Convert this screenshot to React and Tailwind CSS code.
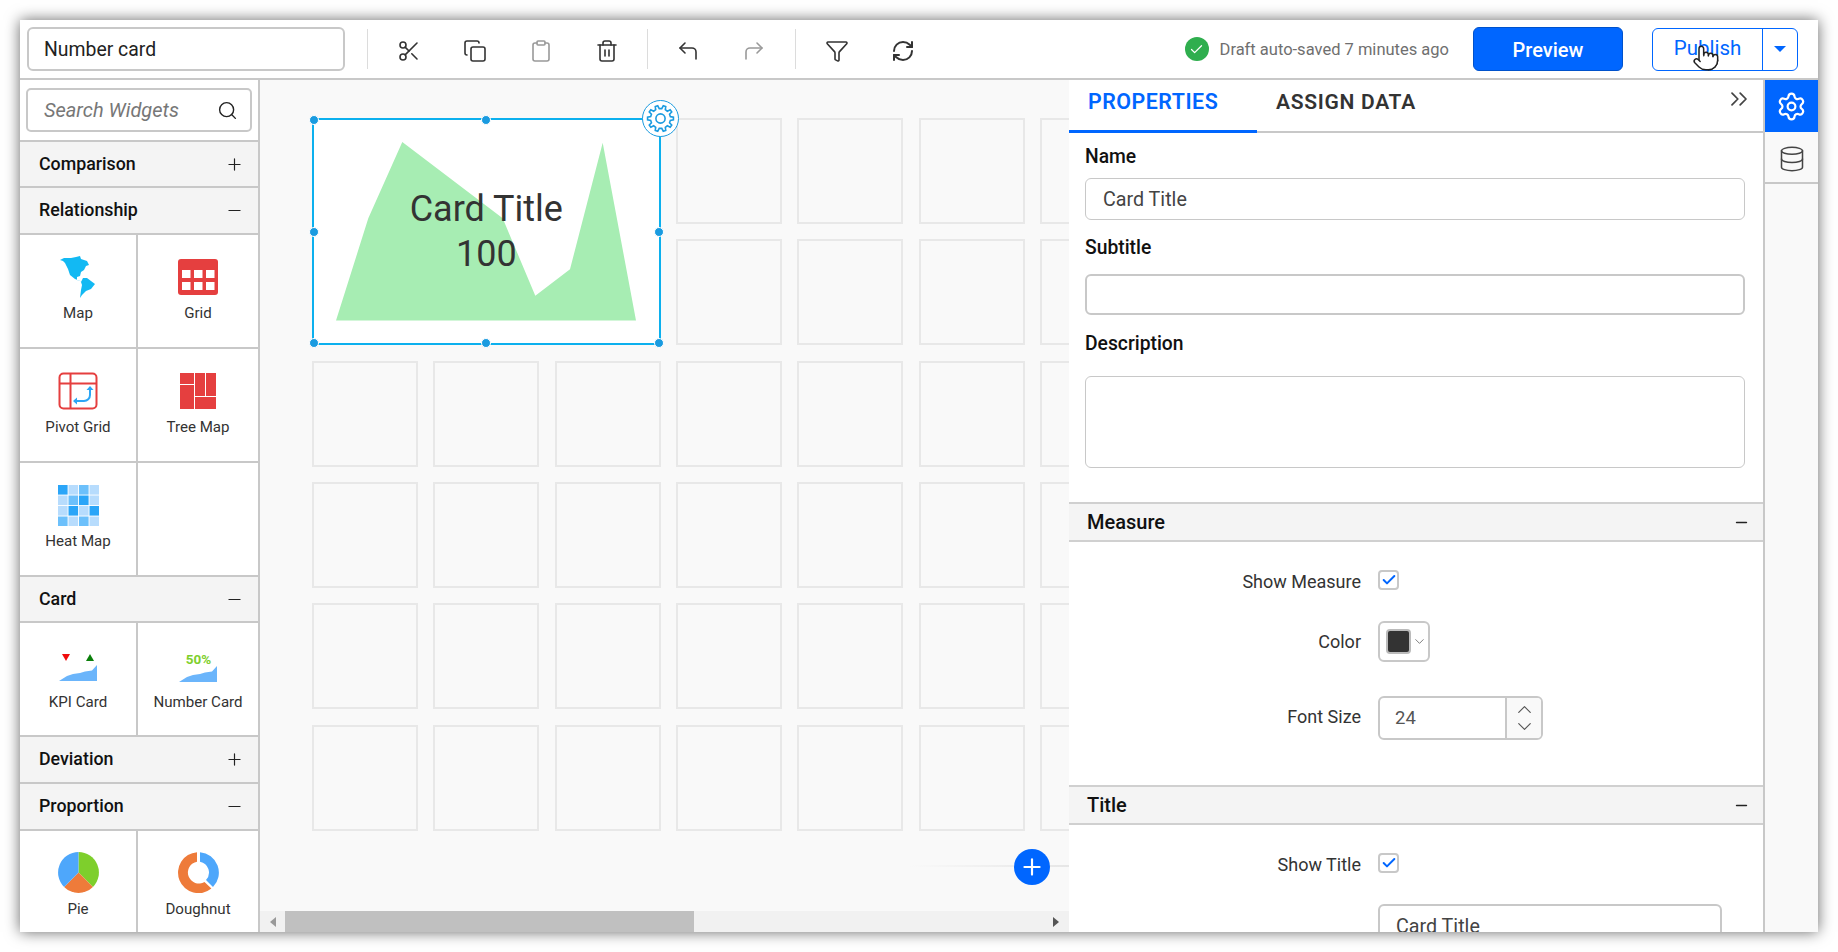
import React from 'react';
import {
  Scissors, Copy, Clipboard, Trash2, CornerUpLeft, CornerUpRight, Funnel, RefreshCw,
  Search, Settings, Database, ChevronsRight, Plus, Minus, Check, ChevronDown, ChevronUp, Pointer,
} from 'lucide-react';

const gearPath = (teeth, ro, ri, c) => {
  const pts = [];
  const step = (Math.PI * 2) / teeth;
  for (let i = 0; i < teeth; i++) {
    const a = i * step;
    [[-0.3, ri], [-0.16, ro], [0.16, ro], [0.3, ri]].forEach(([k, r]) => {
      pts.push(`${(c + r * Math.cos(a + k * step)).toFixed(2)} ${(c + r * Math.sin(a + k * step)).toFixed(2)}`);
    });
  }
  return 'M' + pts.join('L') + 'Z';
};

const MapIcon = () => (
  <svg width="36" height="42" viewBox="0 0 36 42" fill="#12b9f3">
    <path d="M0 4L4 2L11 2L16 1L20 0L21 3L27 5L29 9L26 10L24 14L21 16L20 20L17 21L17 24L23 26L15 23L10 19L8 13L5 7L3 5Z" />
    <path d="M23 22L27 22L31 25L35 28L31 33L26 35L22 39L20 42L21 34L22 29L21 26Z" />
  </svg>
);

const GridIcon = () => (
  <svg width="40" height="36" viewBox="0 0 40 36">
    <rect width="40" height="36" rx="3" fill="#e53f3f" />
    {[4, 16, 28].map(x => [11, 23].map(y => <rect key={`${x}-${y}`} x={x} y={y} width="8.5" height="8" fill="#fff" />))}
  </svg>
);

const PivotIcon = () => (
  <svg width="40" height="38" viewBox="0 0 40 38" fill="none">
    <rect x="1.5" y="1.5" width="37" height="35" rx="4" stroke="#e53f3f" strokeWidth="2" />
    <path d="M1.5 11.5H38.5M12.5 1.5V36.5" stroke="#e53f3f" strokeWidth="2" />
    <path d="M32 17V23a6 6 0 0 1-6 6H18" stroke="#2ca6f5" strokeWidth="2" />
    <path d="M28.5 18L32 14L35.5 18ZM19 25.5L15 29L19 32.5Z" fill="#2ca6f5" />
  </svg>
);

const TreeMapIcon = () => (
  <svg width="36" height="36" viewBox="0 0 36 36" fill="#e53f3f">
    <rect width="14" height="11" />
    <rect y="12" width="14" height="24" />
    <rect x="15" width="10" height="23" />
    <rect x="26" width="10" height="23" />
    <rect x="15" y="24" width="21" height="12" />
  </svg>
);

const heat = [
  ['#2aa5f8', '#b7dcfd', '#6cc0fb', '#b7dcfd'],
  ['#b7dcfd', '#6cc0fb', '#2aa5f8', '#b7dcfd'],
  ['#b7dcfd', '#2aa5f8', '#b7dcfd', '#2aa5f8'],
  ['#6cc0fb', '#b7dcfd', '#6cc0fb', '#b7dcfd'],
];

const HeatIcon = () => (
  <svg width="41" height="41" viewBox="0 0 41 41">
    {heat.map((row, y) => row.map((c, x) => <rect key={`${x}-${y}`} x={x * 10.5} y={y * 10.5} width="9.6" height="9.6" fill={c} />))}
  </svg>
);

const sparkArea = 'M0 16L8 11L14 9L21 8L26 6.5L33 5.5L38 0V16Z';

const KpiIcon = () => (
  <svg width="39" height="28" viewBox="0 0 39 28">
    <path d="M3 1H11L7 8Z" fill="#f00c0c" />
    <path d="M27 8L31 1L35 8Z" fill="#0a7f0a" />
    <path d={sparkArea} transform="translate(0 12)" fill="#6bb5fb" />
  </svg>
);

const NumberIcon = () => (
  <svg width="39" height="30" viewBox="0 0 39 30">
    <text x="19.5" y="11.5" textAnchor="middle" fontFamily="Roboto, sans-serif" fontWeight="700" fontSize="13.5" fill="#7ecf2c">50%</text>
    <path d={sparkArea} transform="translate(0 14)" fill="#6bb5fb" />
  </svg>
);

const PieIcon = () => (
  <svg width="41" height="41" viewBox="0 0 41 41">
    <path d="M20.5 20.5V0A20.5 20.5 0 0 1 34.9 35Z" fill="#7ecf2c" />
    <path d="M20.5 20.5L34.9 35A20.5 20.5 0 0 1 6.1 35Z" fill="#ee7b3a" />
    <path d="M20.5 20.5L6.1 35A20.5 20.5 0 0 1 20.5 0Z" fill="#4ea7fb" />
  </svg>
);

const DoughnutIcon = () => (
  <svg width="41" height="41" viewBox="0 0 41 41">
    <path d="M22 0.2A20.5 20.5 0 0 1 35 35L28 28A11 11 0 0 0 22 9.7Z" fill="#4ea7fb" />
    <path d="M33.4 36.6A20.5 20.5 0 1 1 19 0.2V9.7A11 11 0 1 0 26.5 30Z" fill="#ee7b3a" />
  </svg>
);

const Widget = ({ icon, label, top = 'pt-[20px]', gap = 'mt-[4px]', border = true }) => (
  <div className={`h-[114px] flex flex-col items-center ${top} border-b-2 border-[#c8c8c8] ${border ? 'border-r-2' : ''}`}>
    <div className="h-[44px] flex items-center justify-center">{icon}</div>
    {label && <div className={`${gap} text-[15.1px] leading-[20px] text-[#333]`}>{label}</div>}
  </div>
);

const Section = ({ title, open, h = 'h-[46px]' }) => (
  <div className={`${h} flex items-center justify-between pl-[19px] pr-[14px] bg-[#f4f4f4] border-b-2 border-[#c8c8c8]`}>
    <span className="text-[17.8px] font-medium text-[#111]">{title}</span>
    {open ? <Minus size={19} strokeWidth={1.5} className="text-[#222]" /> : <Plus size={19} strokeWidth={1.5} className="text-[#222]" />}
  </div>
);

const Sidebar = () => (
  <aside className="w-[240px] shrink-0 border-r-2 border-[#c8c8c8] overflow-hidden bg-white">
    <div className="h-[62px] px-[6px] pt-[8px] border-b-2 border-[#c8c8c8]">
      <div className="h-[44px] flex items-center justify-between pl-[16px] pr-[12px] border-2 border-[#c8c8c8] rounded-[5px]">
        <span className="italic text-[20px] text-[#777]">Search Widgets</span>
        <Search size={21} strokeWidth={1.6} className="text-[#222]" />
      </div>
    </div>
    <Section title="Comparison" />
    <Section title="Relationship" open h="h-[47px]" />
    <div className="grid grid-cols-[118px_120px]">
      <Widget icon={<MapIcon />} label="Map" />
      <Widget icon={<GridIcon />} label="Grid" border={false} />
      <Widget icon={<PivotIcon />} label="Pivot Grid" />
      <Widget icon={<TreeMapIcon />} label="Tree Map" border={false} />
      <Widget icon={<HeatIcon />} label="Heat Map" />
      <Widget border={false} />
    </div>
    <Section title="Card" open />
    <div className="grid grid-cols-[118px_120px]">
      <Widget icon={<KpiIcon />} label="KPI Card" top="pt-[22px]" gap="mt-[3px]" />
      <Widget icon={<NumberIcon />} label="Number Card" top="pt-[22px]" gap="mt-[3px]" border={false} />
    </div>
    <Section title="Deviation" h="h-[47px]" />
    <Section title="Proportion" open h="h-[47px]" />
    <div className="grid grid-cols-[118px_120px]">
      <Widget icon={<PieIcon />} label="Pie" top="pt-[19px]" gap="mt-[5px]" />
      <Widget icon={<DoughnutIcon />} label="Doughnut" top="pt-[19px]" gap="mt-[5px]" border={false} />
    </div>
  </aside>
);

const handles = [
  '-left-[5px] -top-[5px]', 'left-1/2 -ml-[5px] -top-[5px]',
  '-left-[5px] top-1/2 -mt-[5px]', '-right-[5px] top-1/2 -mt-[5px]',
  '-left-[5px] -bottom-[5px]', 'left-1/2 -ml-[5px] -bottom-[5px]', '-right-[5px] -bottom-[5px]',
];

const SelectedCard = () => (
  <div className="col-span-3 row-span-2 relative bg-white border-2 border-[#0cb0ee]">
    <svg className="absolute inset-0" width="345" height="224" viewBox="0 0 345 224">
      <path d="M22 200.5L54.3 98.3L88.3 22L188.7 98.3L221.3 175.7L256 149.3L288.7 22.7L322 200.5Z" fill="#a7edb3" />
    </svg>
    <div className="absolute left-0 right-0 top-[67px] text-center text-[36px] leading-[45px] text-[#333]">
      <div>Card Title</div>
      <div>100</div>
    </div>
    {handles.map(h => (
      <span key={h} className={`absolute ${h} w-[10px] h-[10px] rounded-full bg-[#1a9be0] border border-white`} />
    ))}
    <div className="absolute -right-[20px] -top-[20px] w-[37px] h-[37px] rounded-full bg-white border-[1.5px] border-[#1a9be0] flex items-center justify-center">
      <svg width="29" height="29" viewBox="0 0 29 29" fill="none" stroke="#1a9be0" strokeWidth="1.6">
        <path d={gearPath(10, 13, 10, 14.5)} />
        <circle cx="14.5" cy="14.5" r="4.6" />
      </svg>
    </div>
  </div>
);

const Canvas = () => (
  <main className="w-[809px] shrink-0 relative flex flex-col bg-[#f9f9f9] overflow-hidden">
    <div className="flex-1 overflow-hidden pl-[52px] pt-[38px]">
      <div className="w-max grid grid-cols-[repeat(7,106px)] auto-rows-[106px] gap-[15.33px]">
        <SelectedCard />
        {Array.from({ length: 36 }).map((_, i) => (
          <div key={i} className="border-2 border-[#e8e8e8]" />
        ))}
      </div>
    </div>
    <div className="h-[21px] shrink-0 flex items-center bg-[#f1f1f1]">
      <div className="w-[25px] flex justify-center"><div className="w-0 h-0 border-y-[5px] border-y-transparent border-r-[6px] border-r-[#999]" /></div>
      <div className="w-[409px] h-full bg-[#c0c0c0]" />
      <div className="flex-1" />
      <div className="w-[26px] flex justify-center"><div className="w-0 h-0 border-y-[5px] border-y-transparent border-l-[6px] border-l-[#555]" /></div>
    </div>
    <div className="absolute left-[650px] right-0 bottom-[65px] h-[2px] bg-gradient-to-r from-transparent to-[#e6e6e6]" />
    <div className="absolute right-[19px] bottom-[47px] w-[36px] h-[36px] rounded-full bg-[#0066ff] flex items-center justify-center">
      <Plus size={26} strokeWidth={2} className="text-white" />
    </div>
  </main>
);

const Label = ({ className, children }) => (
  <div className={`h-[24px] leading-[24px] text-[19.3px] font-medium text-[#111] ${className}`}>{children}</div>
);

const Row = ({ label, className, labelClass = '', children }) => (
  <div className={`flex items-center gap-[17px] ${className}`}>
    <div className={`w-[292px] text-right text-[18px] text-[#333] ${labelClass}`}>{label}</div>
    {children}
  </div>
);

const CheckBox = () => (
  <div className="w-[21px] h-[20px] rounded-[4px] border-2 border-[#c8c8c8] flex items-center justify-center">
    <Check size={16} strokeWidth={3} className="text-[#0066ff]" />
  </div>
);

const GroupHeader = ({ title, className }) => (
  <div className={`flex items-center justify-between h-[40px] pl-[18px] pr-[13px] bg-[#f4f4f4] border-y-2 border-[#d0d0d0] ${className}`}>
    <span className="text-[20px] font-medium text-[#111]">{title}</span>
    <Minus size={17} strokeWidth={2} className="text-[#222]" />
  </div>
);

const Properties = () => (
  <section className="w-[696px] shrink-0 border-r-2 border-[#c8c8c8] overflow-hidden bg-white">
    <div className="relative h-[53px] flex items-center pb-[6px] border-b-2 border-[#c8c8c8]">
      <div className="w-[188px] pl-[19px] text-[21.4px] font-semibold tracking-[0.5px] text-[#0066ff]">PROPERTIES</div>
      <div className="pl-[19px] text-[21px] font-semibold tracking-[0.7px] text-[#333]">ASSIGN DATA</div>
      <ChevronsRight size={28} strokeWidth={1.5} className="absolute right-[10px] top-[5px] text-[#444]" />
      <div className="absolute left-0 -bottom-[2px] w-[188px] h-[3px] bg-[#0066ff]" />
    </div>
    <div className="pl-[16px] pr-[18px]">
      <Label className="mt-[12px]">Name</Label>
      <div className="mt-[9px] h-[42px] flex items-center pl-[17px] pt-[2px] border border-[#c8c8c8] rounded-[6px] text-[19.7px] text-[#444]">Card Title</div>
      <Label className="mt-[16px]">Subtitle</Label>
      <div className="mt-[14px] h-[41px] border-2 border-[#c8c8c8] rounded-[6px]" />
      <Label className="mt-[17px]">Description</Label>
      <div className="mt-[20px] h-[92px] border border-[#c8c8c8] rounded-[6px]" />
    </div>
    <GroupHeader title="Measure" className="mt-[34px]" />
    <Row label="Show Measure" labelClass="mt-[3px]" className="mt-[28px] h-[20px]"><CheckBox /></Row>
    <Row label="Color" className="mt-[31px]">
      <div className="w-[52px] h-[41px] rounded-[6px] border-2 border-[#c8c8c8] flex items-center pl-[6px]">
        <div className="w-[25px] h-[25px] rounded-[4px] bg-[#333] border-2 border-[#bbb]" />
        <ChevronDown size={15} strokeWidth={1.2} className="ml-[1px] text-[#555]" />
      </div>
    </Row>
    <Row label="Font Size" labelClass="-mt-[4px]" className="mt-[34px] h-[44px]">
      <div className="w-[165px] h-[44px] rounded-[6px] border-2 border-[#c8c8c8] flex overflow-hidden">
        <div className="w-[127px] pl-[15px] pt-[2px] flex items-center text-[18.5px] text-[#555] border-r-2 border-[#c8c8c8]">24</div>
        <div className="flex-1 flex flex-col items-center justify-center bg-[#f9f9f9] text-[#555]">
          <ChevronUp size={23} strokeWidth={1.2} className="-mb-[3px]" />
          <ChevronDown size={23} strokeWidth={1.2} className="-mt-[3px]" />
        </div>
      </div>
    </Row>
    <GroupHeader title="Title" className="mt-[45px]" />
    <Row label="Show Title" labelClass="mt-[3px]" className="mt-[28px] h-[20px]"><CheckBox /></Row>
    <div className="ml-[309px] mt-[31px] w-[344px] h-[44px] pl-[16px] pt-[6px] border-2 border-[#c8c8c8] rounded-[6px] text-[19.7px] text-[#444]">Card Title</div>
  </section>
);

const Rail = () => (
  <div className="flex-1 bg-[#f9f9f9]">
    <div className="h-[52px] flex items-center justify-center bg-[#0066ff]">
      <Settings size={31} strokeWidth={1.7} className="text-white" />
    </div>
    <div className="h-[52px] flex items-center justify-center pt-[3px] border-b-2 border-[#c8c8c8]">
      <Database size={28} strokeWidth={1.3} className="text-[#444]" />
    </div>
  </div>
);

const ToolIcon = ({ icon: Icon, className, cls, sw = 1.6 }) => (
  <div className={`w-[66px] flex justify-center pt-[3px] ${cls || ''}`}>
    <Icon size={24} strokeWidth={sw} className={className} />
  </div>
);

const Sep = () => <div className="w-px h-[40px] bg-[#dcdcdc]" />;

const Header = () => (
  <header className="relative h-[60px] shrink-0 flex items-center pl-[7px] pr-[20px] bg-white border-b-2 border-[#c8c8c8]">
    <div className="w-[318px] h-[44px] flex items-center pl-[15px] pt-[2px] border-2 border-[#c8c8c8] rounded-[6px] text-[19.4px] text-[#222]">Number card</div>
    <div className="ml-[22px]"><Sep /></div>
    <ToolIcon icon={Scissors} className="text-[#333]" cls="ml-[8px]" />
    <ToolIcon icon={Copy} className="text-[#333]" />
    <ToolIcon icon={Clipboard} className="text-[#999]" />
    <ToolIcon icon={Trash2} className="text-[#333]" />
    <div className="ml-[7px]"><Sep /></div>
    <ToolIcon icon={CornerUpLeft} className="text-[#333]" cls="ml-[7px]" />
    <ToolIcon icon={CornerUpRight} className="text-[#999]" />
    <div className="ml-[8px]"><Sep /></div>
    <ToolIcon icon={Funnel} className="text-[#333]" cls="ml-[8px]" />
    <ToolIcon icon={RefreshCw} className="text-[#333]" sw={2} />
    <div className="ml-auto flex items-center">
      <div className="w-[24px] h-[24px] rounded-full bg-[#2fae4e] flex items-center justify-center">
        <Check size={15} strokeWidth={2} className="text-white" />
      </div>
      <span className="ml-[11px] pt-[2px] text-[16.5px] text-[#6f6f6f]">Draft auto-saved 7 minutes ago</span>
      <div className="ml-[24px] w-[150px] h-[44px] flex items-center justify-center pt-[1px] rounded-[6px] bg-[#0066ff] border border-[#0052cc] text-[20px] font-medium text-white">Preview</div>
      <div className="ml-[29px] w-[146px] h-[43px] flex rounded-[6px] border border-[#0066ff]">
        <div className="w-[110px] flex items-center justify-center pb-[1px] text-[20.5px] text-[#0066ff] border-r border-[#0066ff]">Publish</div>
        <div className="flex-1 flex items-center justify-center">
          <div className="w-0 h-0 border-x-[6px] border-x-transparent border-t-[6px] border-t-[#0066ff]" />
        </div>
      </div>
    </div>
    <Pointer size={28} strokeWidth={1.3} fill="#fff" className="absolute left-[1672px] top-[24px] text-[#222]" />
  </header>
);

export default function App() {
  return (
    <div className="w-[1838px] h-[952px] p-[20px] bg-white overflow-hidden font-['Roboto',sans-serif]">
      <div className="w-[1798px] h-[912px] flex flex-col bg-white shadow-[0_0_14px_rgba(0,0,0,0.6)]">
        <Header />
        <div className="flex flex-1 min-h-0">
          <Sidebar />
          <Canvas />
          <Properties />
          <Rail />
        </div>
      </div>
    </div>
  );
}
